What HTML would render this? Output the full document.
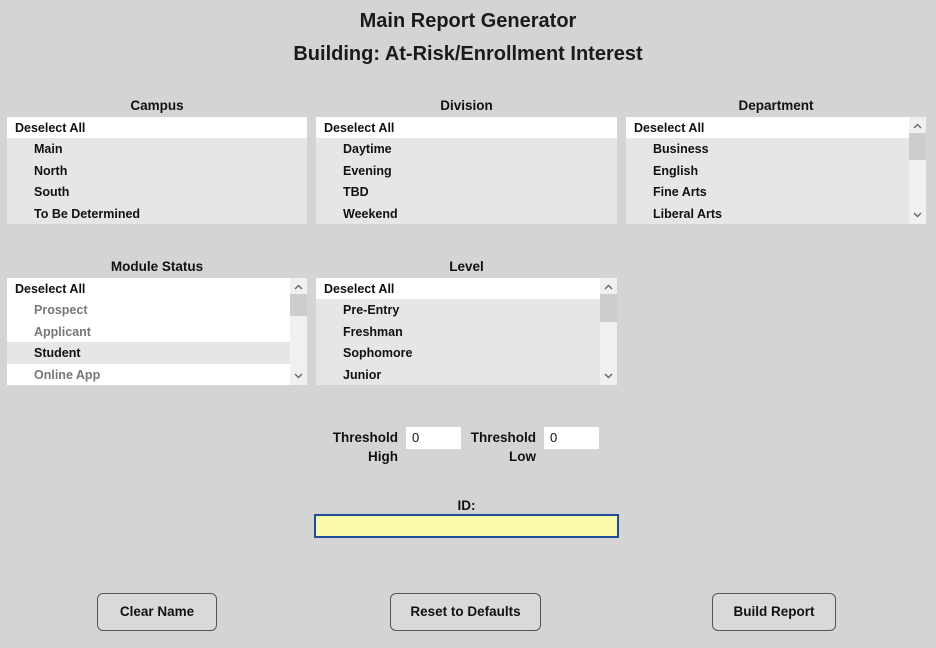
<!DOCTYPE html><html><head><style>
body{margin:0;width:936px;height:648px;background:#d4d4d4;font-family:"Liberation Sans",sans-serif;position:relative;overflow:hidden;color:#111}
.t{position:absolute;left:0;width:936px;text-align:center;font-size:20px;font-weight:bold;color:#1a1a1a}
.lab{position:absolute;font-size:13.5px;font-weight:bold;text-align:center}
.box{position:absolute;background:#e6e6e6;overflow:hidden;width:300px;height:107px}
.r{position:absolute;left:0;right:0;height:21.5px;line-height:23px;font-size:12.5px;font-weight:bold;padding-left:27px}
.h{background:#fff;padding-left:8px;height:21px;line-height:22px;top:0}
.w{background:#fff}
.g{color:#777}
.sb{position:absolute;right:0;top:0;width:17px;height:107px;background:#f0f0f0}
.th{position:absolute;left:0;width:17px;height:22px;background:#cdcdcd}
.ar{position:absolute;left:0;width:17px;height:14px}
.in{position:absolute;background:#fff;height:22px;font-size:13px;line-height:22px;padding-left:6px;box-sizing:border-box}
.btn{position:absolute;border:1px solid #555;border-radius:6px;background:#d9d9d9;font-size:13.5px;font-weight:bold;text-align:center;line-height:36px;box-sizing:border-box;height:38px}
</style></head><body>
<div class="t" style="top:10px">Main Report Generator</div>
<div class="t" style="top:43px">Building: At-Risk/Enrollment Interest</div>

<div class="lab" style="left:7px;width:300px;top:98px">Campus</div>
<div class="box" style="left:7px;top:117px">
<div class="r h">Deselect All</div>
<div class="r" style="top:21px">Main</div><div class="r" style="top:42.5px">North</div><div class="r" style="top:64px">South</div><div class="r" style="top:85.5px">To Be Determined</div></div>

<div class="lab" style="left:316px;width:301px;top:98px">Division</div>
<div class="box" style="left:316px;top:117px;width:301px">
<div class="r h">Deselect All</div>
<div class="r" style="top:21px">Daytime</div><div class="r" style="top:42.5px">Evening</div><div class="r" style="top:64px">TBD</div><div class="r" style="top:85.5px">Weekend</div></div>

<div class="lab" style="left:626px;width:300px;top:98px">Department</div>
<div class="box" style="left:626px;top:117px">
<div class="r h">Deselect All</div>
<div class="r" style="top:21px">Business</div><div class="r" style="top:42.5px">English</div><div class="r" style="top:64px">Fine Arts</div><div class="r" style="top:85.5px">Liberal Arts</div>
<div class="sb"><svg class="ar" style="top:2px" viewBox="0 0 17 14"><path d="M5 9 L8.5 5.5 L12 9" fill="none" stroke="#666" stroke-width="1.4"/></svg><div class="th" style="top:16px;height:27px"></div><svg class="ar" style="top:91px" viewBox="0 0 17 14"><path d="M5 5 L8.5 8.5 L12 5" fill="none" stroke="#666" stroke-width="1.4"/></svg></div></div>

<div class="lab" style="left:7px;width:300px;top:259px">Module Status</div>
<div class="box" style="left:7px;top:278px;background:#fff">
<div class="r h">Deselect All</div>
<div class="r g w" style="top:21px">Prospect</div><div class="r g w" style="top:42.5px">Applicant</div><div class="r" style="top:64px;background:#e6e6e6">Student</div><div class="r g w" style="top:85.5px">Online App</div>
<div class="sb"><svg class="ar" style="top:2px" viewBox="0 0 17 14"><path d="M5 9 L8.5 5.5 L12 9" fill="none" stroke="#666" stroke-width="1.4"/></svg><div class="th" style="top:16px"></div><svg class="ar" style="top:91px" viewBox="0 0 17 14"><path d="M5 5 L8.5 8.5 L12 5" fill="none" stroke="#666" stroke-width="1.4"/></svg></div></div>

<div class="lab" style="left:316px;width:301px;top:259px">Level</div>
<div class="box" style="left:316px;top:278px;width:301px">
<div class="r h">Deselect All</div>
<div class="r" style="top:21px">Pre-Entry</div><div class="r" style="top:42.5px">Freshman</div><div class="r" style="top:64px">Sophomore</div><div class="r" style="top:85.5px">Junior</div>
<div class="sb"><svg class="ar" style="top:2px" viewBox="0 0 17 14"><path d="M5 9 L8.5 5.5 L12 9" fill="none" stroke="#666" stroke-width="1.4"/></svg><div class="th" style="top:16px;height:28px"></div><svg class="ar" style="top:91px" viewBox="0 0 17 14"><path d="M5 5 L8.5 8.5 L12 5" fill="none" stroke="#666" stroke-width="1.4"/></svg></div></div>

<div class="lab" style="left:318px;width:80px;top:428px;text-align:right;line-height:19px">Threshold<br>High</div>
<div class="in" style="left:406px;top:427px;width:55px">0</div>
<div class="lab" style="left:456px;width:80px;top:428px;text-align:right;line-height:19px">Threshold<br>Low</div>
<div class="in" style="left:544px;top:427px;width:55px">0</div>

<div class="lab" style="left:316px;width:301px;top:498px">ID:</div>
<div style="position:absolute;left:314px;top:514px;width:305px;height:24px;box-sizing:border-box;border:2px solid #1f4e96;background:#fafaaa"></div>

<div class="btn" style="left:97px;top:593px;width:120px">Clear Name</div>
<div class="btn" style="left:390px;top:593px;width:151px">Reset to Defaults</div>
<div class="btn" style="left:712px;top:593px;width:124px">Build Report</div>
</body></html>
